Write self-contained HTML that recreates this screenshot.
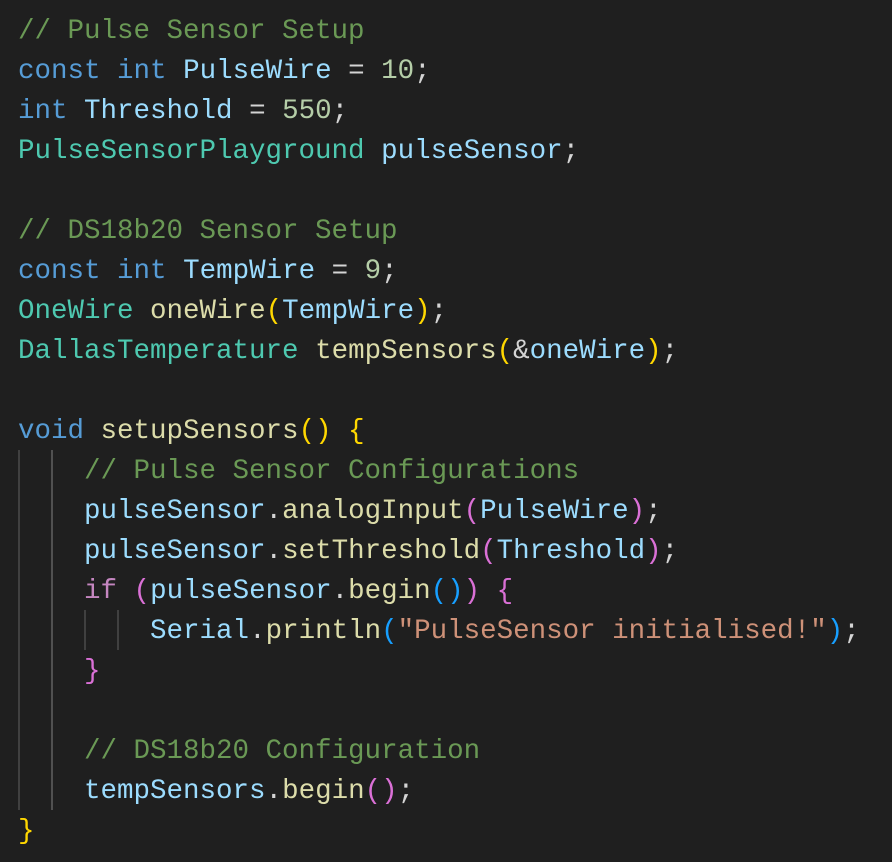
<!DOCTYPE html>
<html><head><style>
html,body{margin:0;padding:0;background:#1f1f1f;width:892px;height:862px;overflow:hidden}
pre{margin:0;position:absolute;left:18px;top:12px;font-family:"Liberation Mono","DejaVu Sans Mono",monospace;font-size:27.5px;line-height:40px;color:#d4d4d4}
.c{color:#6a9955}.k{color:#569cd6}.t{color:#4ec9b0}.v{color:#9cdcfe}.n{color:#b5cea8}.f{color:#dcdcaa}.s{color:#ce9178}.p{color:#c586c0}
.b1{color:#ffd700}.b2{color:#da70d6}.b3{color:#179fff}
.g{position:absolute;width:2px;background:#404040}
</style></head><body>
<div class="g" style="left:18px;top:450px;height:360px"></div>
<div class="g" style="left:51px;top:450px;height:360px;background:#505050"></div>
<div class="g" style="left:84px;top:610px;height:40px"></div>
<div class="g" style="left:117px;top:610px;height:40px"></div>
<pre><span class="c">// Pulse Sensor Setup</span>
<span class="k">const</span> <span class="k">int</span> <span class="v">PulseWire</span> = <span class="n">10</span>;
<span class="k">int</span> <span class="v">Threshold</span> = <span class="n">550</span>;
<span class="t">PulseSensorPlayground</span> <span class="v">pulseSensor</span>;

<span class="c">// DS18b20 Sensor Setup</span>
<span class="k">const</span> <span class="k">int</span> <span class="v">TempWire</span> = <span class="n">9</span>;
<span class="t">OneWire</span> <span class="f">oneWire</span><span class="b1">(</span><span class="v">TempWire</span><span class="b1">)</span>;
<span class="t">DallasTemperature</span> <span class="f">tempSensors</span><span class="b1">(</span>&amp;<span class="v">oneWire</span><span class="b1">)</span>;

<span class="k">void</span> <span class="f">setupSensors</span><span class="b1">()</span> <span class="b1">{</span>
    <span class="c">// Pulse Sensor Configurations</span>
    <span class="v">pulseSensor</span>.<span class="f">analogInput</span><span class="b2">(</span><span class="v">PulseWire</span><span class="b2">)</span>;
    <span class="v">pulseSensor</span>.<span class="f">setThreshold</span><span class="b2">(</span><span class="v">Threshold</span><span class="b2">)</span>;
    <span class="p">if</span> <span class="b2">(</span><span class="v">pulseSensor</span>.<span class="f">begin</span><span class="b3">()</span><span class="b2">)</span> <span class="b2">{</span>
        <span class="v">Serial</span>.<span class="f">println</span><span class="b3">(</span><span class="s">"PulseSensor initialised!"</span><span class="b3">)</span>;
    <span class="b2">}</span>

    <span class="c">// DS18b20 Configuration</span>
    <span class="v">tempSensors</span>.<span class="f">begin</span><span class="b2">()</span>;
<span class="b1">}</span></pre>
</body></html>
